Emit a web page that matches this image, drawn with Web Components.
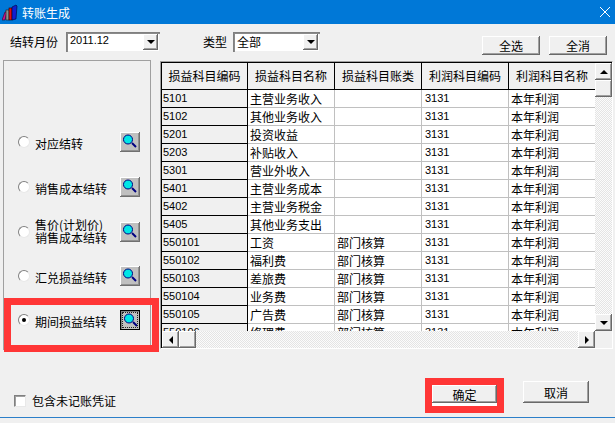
<!DOCTYPE html>
<html>
<head>
<meta charset="utf-8">
<style>
  html, body { margin: 0; padding: 0; background: #f0f0f0; }
  body { font: 12px "Noto Sans CJK SC", "Liberation Sans", sans-serif; color: #000; }
</style>
</head>
<body>
<trans-dialog>
  <span slot="title">转账生成</span>

  <span slot="tools" style="width:56px;line-height:20px;margin-left:10px">结转月份</span>
  <win-combo slot="tools" value="2011.12" num style="width:94px"></win-combo>
  <span slot="tools" style="width:30px;line-height:20px;margin-left:43px">类型</span>
  <win-combo slot="tools" value="全部" style="width:87px"></win-combo>
  <win-button slot="tools" style="width:58px;height:19px;margin:4px 0 0 auto">全选</win-button>
  <win-button slot="tools" style="width:58px;height:19px;margin:4px 8px 0 9px">全消</win-button>

  <type-row slot="types" style="height:45px">对应结转</type-row>
  <type-row slot="types" style="height:45px">销售成本结转</type-row>
  <type-row slot="types" two style="height:44px">售价(计划价)<br>销售成本结转</type-row>
  <type-row slot="types" style="height:44px">汇兑损益结转</type-row>
  <type-row slot="types" checked>期间损益结转</type-row>

  <account-grid slot="grid"></account-grid>

  <win-check slot="footer" style="margin:44px 0 0 14px">包含未记账凭证</win-check>
  <win-button slot="footer" style="width:65px;height:18px;margin:35px 0 0 auto;box-shadow:0 3px #fff">确定</win-button>
  <win-button slot="footer" style="width:66px;height:22px;margin:31px 26px 0 26px">取消</win-button>

  <red-mark slot="marks" box="4,298,155,54"></red-mark>
  <red-mark slot="marks" box="425,378,79,35"></red-mark>
</trans-dialog>

<script>
const BEVEL = "box-shadow: inset -1px -1px #696969, inset 1px 1px #fff, inset -2px -2px #a0a0a0;";

class TransDialog extends HTMLElement {
  connectedCallback() {
    this.attachShadow({ mode: "open" }).innerHTML = `
    <style>
      :host { display: block; position: relative; width: 615px; height: 423px; overflow: hidden; background: #f0f0f0; }
      .title { height: 24px; background: #0078d7; color: #fff; display: flex; align-items: center; }
      .title svg { margin-left: 2px; }
      .title .name { margin-left: 4px; flex: 1; }
      .title .close { margin-right: 5px; }
      .tools { height: 36px; box-sizing: border-box; padding-top: 8px; display: flex; align-items: flex-start; }
      .main { height: 290px; display: flex; gap: 9px; padding-left: 3px; }
      .types { width: 148px; box-sizing: border-box; border: 1px solid #a0a0a0; padding: 71px 10px 0 14px; }
      .footer { height: 67px; display: flex; align-items: flex-start; }
      .line { height: 1px; background: #2b7fc9; }
    </style>
    <div class="title">
      <svg width="16" height="17" viewBox="0 0 16 17">
        <polygon points="0,16 3,8 5,8 3,16" fill="#d0108c" stroke="#201020" stroke-width=".6"/>
        <rect x="4" y="6" width="3" height="10" fill="#909090" stroke="#202020" stroke-width=".6"/>
        <rect x="7" y="4" width="3" height="12" fill="#e01010" stroke="#200000" stroke-width=".6"/>
        <polygon points="10,16 10,3 14,1 15,2 14,15" fill="#1020d0" stroke="#000030" stroke-width=".6"/>
      </svg>
      <span class="name"><slot name="title"></slot></span>
      <svg class="close" width="10" height="10" viewBox="0 0 10 10"><path d="M0 0L10 10M10 0L0 10" stroke="#fff" fill="none"/></svg>
    </div>
    <div class="tools"><slot name="tools"></slot></div>
    <div class="main">
      <div class="types"><slot name="types"></slot></div>
      <slot name="grid"></slot>
    </div>
    <div class="footer"><slot name="footer"></slot></div>
    <div class="line"></div>
    <slot name="marks"></slot>
    `;
  }
}

class WinCombo extends HTMLElement {
  connectedCallback() {
    const num = this.hasAttribute("num");
    this.attachShadow({ mode: "open" }).innerHTML = `
    <style>
      :host { display: flex; box-sizing: border-box; height: 20px; background: #fff; padding: 2px; align-items: stretch;
        box-shadow: inset 1px 1px #808080, inset 2px 2px #8a8a8a, inset -1px -1px #f0f0f0; }
      .val { flex: 1; padding-left: 2px; line-height: 16px; white-space: nowrap; }
      .num { font: 11px "Liberation Sans", sans-serif; }
      .btn { width: 15px; background: #f0f0f0; display: flex; align-items: center; justify-content: center; ${BEVEL} }
      .arrow { border: 4px solid transparent; border-top: 4px solid #000; border-bottom: 0; }
    </style>
    <div class="val ${num ? "num" : ""}">${this.getAttribute("value")}</div>
    <div class="btn"><div class="arrow"></div></div>
    `;
  }
}

class WinButton extends HTMLElement {
  connectedCallback() {
    this.attachShadow({ mode: "open" }).innerHTML = `
    <style>
      :host { display: flex; align-items: center; justify-content: center; box-sizing: border-box; background: #f0f0f0; position: relative; }
      .face { position: absolute; inset: 0; ${BEVEL} }
      .text { position: relative; }
    </style>
    <div class="face"></div><span class="text"><slot></slot></span>
    `;
  }
}

class TypeRow extends HTMLElement {
  connectedCallback() {
    const on = this.hasAttribute("checked");
    this.attachShadow({ mode: "open" }).innerHTML = `
    <style>
      :host { display: block; box-sizing: border-box; }
      .row { display: flex; align-items: center; height: 20px; }
      .radio { width: 12px; height: 12px; box-sizing: border-box; border-radius: 50%; background: #fff; border: 1px solid;
        border-color: #808080 #e8e8e8 #e8e8e8 #808080; display: flex; align-items: center; justify-content: center; }
      .dot { width: 4px; height: 4px; border-radius: 50%; background: #000; }
      .label { flex: 1; margin-left: 5px; line-height: 13px; padding-top: 2px; white-space: nowrap; }
      :host([two]) .label { padding-top: 0; margin-top: -2px; }
      .find { width: 20px; height: 20px; box-sizing: border-box; background: #c0c0c0; position: relative;
        box-shadow: inset -1px -1px #707070, inset 1px 1px #fff, inset -2px -2px #909090; }
      .find svg { position: absolute; left: 0; top: 0; }
      .find.on { border: 1px solid #000; box-shadow: inset 1px 1px #808080; }
      .find.on::after { content: ""; position: absolute; inset: 1px; border: 1px dotted #222; }
    </style>
    <div class="row">
      <div class="radio">${on ? '<div class="dot"></div>' : ""}</div>
      <div class="label"><slot></slot></div>
      <div class="find ${on ? "on" : ""}">
        <svg width="20" height="20" viewBox="0 0 20 20">
          <path d="M12 11L16 15" stroke="#000080" stroke-width="2" fill="none"/>
          <circle cx="8" cy="7.5" r="4.5" fill="#00e6e6" stroke="#000080"/>
        </svg>
      </div>
    </div>
    `;
  }
}

class WinCheck extends HTMLElement {
  connectedCallback() {
    this.attachShadow({ mode: "open" }).innerHTML = `
    <style>
      :host { display: flex; align-items: center; gap: 6px; height: 13px; }
      .box { width: 12px; height: 12px; box-sizing: border-box; background: #fff; border: 1px solid; border-color: #808080 #e8e8e8 #e8e8e8 #808080;
        box-shadow: inset 1px 1px #a0a0a0; }
    </style>
    <div class="box"></div><span><slot></slot></span>
    `;
  }
}

class WinScroll extends HTMLElement {
  connectedCallback() {
    const v = this.getAttribute("dir") === "v";
    const arrow = (side) => `<div class="b"><div class="a ${side}"></div></div>`;
    this.attachShadow({ mode: "open" }).innerHTML = `
    <style>
      :host { display: flex; flex-direction: ${v ? "column" : "row"};
        background: repeating-conic-gradient(#e4e4e4 0 25%, #fbfbfb 0 50%) 0 0 / 2px 2px; }
      .b, .t { flex: none; width: 17px; height: 17px; background: #f0f0f0; ${BEVEL} display: flex; align-items: center; justify-content: center; }
      .fill { flex: 1; }
      .a { width: 0; height: 0; border: 4px solid transparent; }
      .up { border-bottom-color: #000; border-top: 0; }
      .down { border-top-color: #000; border-bottom: 0; }
      .left { border-right-color: #000; border-left: 0; }
      .right { border-left-color: #000; border-right: 0; }
    </style>
    ${arrow(v ? "up" : "left")}<div class="t"></div><div class="fill"></div>${arrow(v ? "down" : "right")}
    `;
  }
}

class AccountGrid extends HTMLElement {
  connectedCallback() {
    const rows = [
      ["5101", "主营业务收入", "", "3131", "本年利润"],
      ["5102", "其他业务收入", "", "3131", "本年利润"],
      ["5201", "投资收益", "", "3131", "本年利润"],
      ["5203", "补贴收入", "", "3131", "本年利润"],
      ["5301", "营业外收入", "", "3131", "本年利润"],
      ["5401", "主营业务成本", "", "3131", "本年利润"],
      ["5402", "主营业务税金", "", "3131", "本年利润"],
      ["5405", "其他业务支出", "", "3131", "本年利润"],
      ["550101", "工资", "部门核算", "3131", "本年利润"],
      ["550102", "福利费", "部门核算", "3131", "本年利润"],
      ["550103", "差旅费", "部门核算", "3131", "本年利润"],
      ["550104", "业务费", "部门核算", "3131", "本年利润"],
      ["550105", "广告费", "部门核算", "3131", "本年利润"],
      ["550106", "修理费", "部门核算", "3131", "本年利润"],
    ];
    const head = ["损益科目编码", "损益科目名称", "损益科目账类", "利润科目编码", "利润科目名称"];
    let cells = head.map((h) => `<div class="h">${h}</div>`).join("");
    rows.forEach((r) => {
      r.forEach((c, i) => {
        const num = i === 0 || i === 3 ? " n" : "";
        cells += `<div class="c${i === 0 ? " k" : ""}${num}">${c}</div>`;
      });
    });
    this.attachShadow({ mode: "open" }).innerHTML = `
    <style>
      :host { display: block; box-sizing: border-box; width: 453px; height: 288px; margin-top: 1px;
        border: 1px solid #fff; border-color: #a0a0a0 #fff #fff #a0a0a0; }
      .frame { border-top: 1px solid #000; border-left: 1px solid #000; width: 451px; height: 286px; box-sizing: border-box;
        display: grid; grid-template-columns: 433px 17px; grid-template-rows: 268px 17px; }
      .view { overflow: hidden; }
      .table { display: grid; grid-template-columns: 86px 87px 87px 87px 86px; grid-auto-rows: 18px; grid-template-rows: 27px; }
      .h, .c { box-sizing: border-box; border-right: 1px solid #c0c0c0; border-bottom: 1px solid #c0c0c0; white-space: nowrap; overflow: hidden; }
      .h { background: #f0f0f0; border-color: #000; text-align: center; line-height: 26px; }
      .c { background: #fff; padding-left: 2px; line-height: 17px; }
      .n { font: 11px/17px "Liberation Sans", sans-serif; padding-left: 3px; }
      .k { background: #f0f0f0; border-color: #000; padding-left: 1px; }
      .h:nth-child(5), .c:nth-child(5n) { border-right: 0; }
      .corner { background: #f0f0f0; }
    </style>
    <div class="frame">
      <div class="view"><div class="table">${cells}</div></div>
      <win-scroll dir="v"></win-scroll>
      <win-scroll dir="h"></win-scroll>
      <div class="corner"></div>
    </div>
    `;
  }
}

class RedMark extends HTMLElement {
  connectedCallback() {
    const [x, y, w, h] = this.getAttribute("box").split(",");
    this.attachShadow({ mode: "open" }).innerHTML = `
    <style>
      :host { display: block; position: absolute; box-sizing: border-box; border: 7px solid #ff3636; left: ${x}px; top: ${y}px; width: ${w}px; height: ${h}px; }
    </style>
    `;
  }
}

customElements.define("trans-dialog", TransDialog);
customElements.define("win-combo", WinCombo);
customElements.define("win-button", WinButton);
customElements.define("type-row", TypeRow);
customElements.define("win-check", WinCheck);
customElements.define("win-scroll", WinScroll);
customElements.define("account-grid", AccountGrid);
customElements.define("red-mark", RedMark);
</script>
</body>
</html>
